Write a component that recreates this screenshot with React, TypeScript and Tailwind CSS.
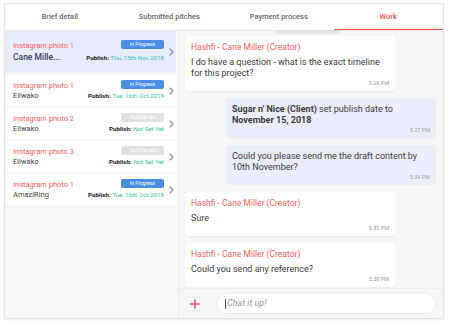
import React from 'react'

type Brief = {
  title: string
  name: string
  status: 'progress' | 'idle'
  date: string
  active?: boolean
}

const briefs: Brief[] = [
  { title: 'Instagram photo 1', name: 'Cane Mille...', status: 'progress', date: 'Thu, 15th Nov 2018', active: true },
  { title: 'Instagram photo 1', name: 'Eilwako', status: 'progress', date: 'Tue, 16th Oct 2018' },
  { title: 'Instagram photo 2', name: 'Eilwako', status: 'idle', date: 'Not Set Yet' },
  { title: 'Instagram photo 3', name: 'Eilwako', status: 'idle', date: 'Not Set Yet' },
  { title: 'Instagram photo 1', name: 'AmaziRing', status: 'progress', date: 'Tue, 16th Oct 2018' },
]

const tabs = ['Brief detail', 'Submitted pitches', 'Payment process', 'Work']

function Chevron() {
  return (
    <svg width="5" height="8" viewBox="0 0 5 8" className="shrink-0">
      <polyline points="1,1 4,4 1,7" fill="none" stroke="#8a8a8a" strokeWidth="1.1" strokeLinecap="round" strokeLinejoin="round" />
    </svg>
  )
}

function BriefRow({ brief }: { brief: Brief }) {
  return (
    <div
      className={`flex items-center pl-[8px] pr-[2px] mr-[2px] ${
        brief.active ? 'h-[41px] bg-[#e7ebfc] mb-[1px]' : 'h-[31px] bg-white'
      }`}
    >
      <div className="flex flex-1 items-center justify-between">
        <div className="flex flex-col">
          <span className="text-[7.5px] leading-[10px] text-[#f5625d]">{brief.title}</span>
          <span
            className={
              brief.active
                ? 'text-[8.5px] leading-[12px] font-medium text-[#3b3f63]'
                : 'text-[7.5px] leading-[10px] text-[#444]'
            }
          >
            {brief.name}
          </span>
        </div>
        <div className="flex flex-col items-end">
          <div
            className={`w-[43px] h-[9px] rounded-[2px] flex items-center justify-center text-[5px] text-white ${
              brief.status === 'progress' ? 'bg-[#4a8fe6]' : 'bg-[#e1e1e1]'
            } ${brief.active ? 'mb-[5px]' : 'mb-[3px]'}`}
          >
            {brief.status === 'progress' ? 'In Progress' : 'Not Started'}
          </div>
          <span className="text-[6.2px] leading-[9px] whitespace-nowrap">
            <span className="font-bold text-[#222]">Publish: </span>
            <span className="text-[#3cbfae]">{brief.date}</span>
          </span>
        </div>
      </div>
      <div className="w-[10px] flex justify-end">
        <Chevron />
      </div>
    </div>
  )
}

function Time({ t }: { t: string }) {
  return <div className="text-right text-[5.5px] leading-[8px] text-[#9a9a9a]">{t}</div>
}

function CreatorMsg({ text, time }: { text: string; time: string }) {
  return (
    <div className="ml-[6px] w-[210px] bg-white rounded-[4px] shadow-[0_1px_2px_rgba(0,0,0,0.05)] px-[6px] pt-[5px] pb-[4px]">
      <div className="text-[8.5px] leading-[12px] text-[#f5625d] mb-[4px]">Hashfi - Cane Miller (Creator)</div>
      <div className="text-[9px] leading-[11px] text-[#3d3d3d]">{text}</div>
      <Time t={time} />
    </div>
  )
}

function ClientMsg({ children, time }: { children: React.ReactNode; time: string }) {
  return (
    <div className="self-end mr-[7px] w-[210px] bg-[#ebedfb] rounded-[4px] px-[6px] pt-[6px] pb-[4px]">
      <div className="text-[9px] leading-[11px] text-[#3d3d3d]">{children}</div>
      <Time t={time} />
    </div>
  )
}

export default function App() {
  return (
    <div className="w-[451px] h-[323px] bg-white pt-[3px] pl-[4px]" style={{ fontFamily: 'Roboto, "Liberation Sans", sans-serif' }}>
      <div className="w-[440px] h-[316px] border border-[#e3e3e3] shadow-[0_1px_2px_rgba(0,0,0,0.08)] flex flex-col">
        {/* Tabs */}
        <div className="h-[27px] flex border-b border-[#e8e8e8] bg-white shrink-0">
          {tabs.map((tab) => (
            <div
              key={tab}
              className={`flex-1 flex items-center justify-center text-[7.5px] font-medium ${
                tab === 'Work' ? 'text-[#f5504f] border-b-[1.5px] border-[#f5504f]' : 'text-[#6b6b6b]'
              }`}
            >
              {tab}
            </div>
          ))}
        </div>

        <div className="flex flex-1 min-h-0">
          {/* Brief list */}
          <div className="w-[174px] bg-[#f8f8f8] border-r border-[#ededed] flex flex-col gap-[2px]">
            {briefs.map((b, i) => (
              <BriefRow key={i} brief={b} />
            ))}
          </div>

          {/* Chat */}
          <div className="relative flex-1 bg-[#f7f7f7] flex flex-col">
            <div className="absolute left-[95px] top-0 w-[65px] h-[2px] rounded-full bg-[#d6d6d6] blur-[1px]" />
            <div className="flex-1 min-h-0 overflow-hidden flex flex-col gap-[7px] pt-[5px]">
              <CreatorMsg text="I do have a question - what is the exact timeline for this project?" time="5.26 PM" />
              <ClientMsg time="5.27 PM">
                <span className="font-bold">Sugar n' Nice (Client)</span> set publish date to{' '}
                <span className="font-bold">November 15, 2018</span>
              </ClientMsg>
              <ClientMsg time="5.34 PM">Could you please send me the draft content by 10th November?</ClientMsg>
              <CreatorMsg text="Sure" time="5.35 PM" />
              <CreatorMsg text="Could you send any reference?" time="5.38 PM" />
            </div>
            <div className="h-[30px] shrink-0 border-t border-[#eeeeee] flex items-center pl-[11px] pr-[7px]">
              <svg width="10" height="10" viewBox="0 0 10 10" className="shrink-0">
                <path d="M5 0.5V9.5M0.5 5H9.5" stroke="#f0506e" strokeWidth="1.4" strokeLinecap="round" />
              </svg>
              <div className="ml-[16px] flex-1 h-[21px] rounded-full bg-white border border-[#ececec] flex items-center pl-[8px]">
                <span className="w-px h-[10px] bg-[#555] mr-[1px]" />
                <span className="text-[9px] italic text-[#9a9a9a]">Chat it up!</span>
              </div>
            </div>
          </div>
        </div>
      </div>
    </div>
  )
}
